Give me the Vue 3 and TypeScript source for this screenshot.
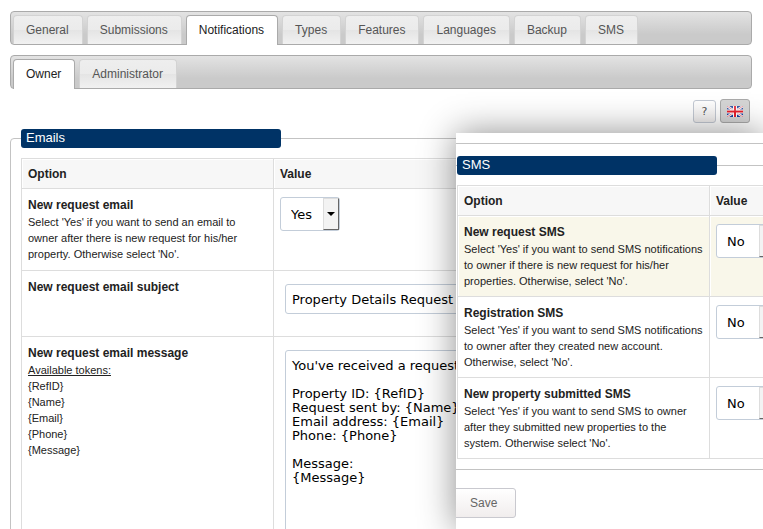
<script setup lang="ts">
import { reactive, ref } from 'vue'

interface SmsOption {
  id: string
  title: string
  hint: string
  value: string
}

const mainTabs: string[] = ['General', 'Submissions', 'Notifications', 'Types', 'Features', 'Languages', 'Backup', 'SMS']
const subTabs: string[] = ['Owner', 'Administrator']
const activeMain = ref('Notifications')
const activeSub = ref('Owner')

const tokens: string[] = ['{RefID}', '{Name}', '{Email}', '{Phone}', '{Message}']

const sendEmail = ref('Yes')
const subject = ref('Property Details Request')
const message = ref(
  "You've received a request\n\nProperty ID: {RefID}\nRequest sent by: {Name}\nEmail address: {Email}\nPhone: {Phone}\n\nMessage:\n{Message}",
)

const smsOptions = reactive<SmsOption[]>([
  {
    id: 'sms-request',
    title: 'New request SMS',
    hint: "Select 'Yes' if you want to send SMS notifications to owner if there is new request for his/her properties. Otherwise, select 'No'.",
    value: 'No',
  },
  {
    id: 'sms-registration',
    title: 'Registration SMS',
    hint: "Select 'Yes' if you want to send SMS notifications to owner after they created new account. Otherwise, select 'No'.",
    value: 'No',
  },
  {
    id: 'sms-property',
    title: 'New property submitted SMS',
    hint: "Select 'Yes' if you want to send SMS to owner after they submitted new properties to the system. Otherwise select 'No'.",
    value: 'No',
  },
])
</script>

<template>
  <div class="page">
    <nav class="tab-bar">
      <a
        v-for="tab in mainTabs"
        :key="tab"
        href="#"
        class="tab"
        :class="{ active: tab === activeMain }"
        @click.prevent="activeMain = tab"
      >{{ tab }}</a>
    </nav>
    <nav class="tab-bar">
      <a
        v-for="tab in subTabs"
        :key="tab"
        href="#"
        class="tab"
        :class="{ active: tab === activeSub }"
        @click.prevent="activeSub = tab"
      >{{ tab }}</a>
    </nav>

    <div class="tools">
      <button type="button" class="tool help">?</button>
      <button type="button" class="tool flag" aria-label="English">
        <svg width="16" height="11" viewBox="0 0 16 11" aria-hidden="true">
          <rect width="16" height="11" fill="#1c3f9a" />
          <path d="M0 0L16 11M16 0L0 11" stroke="#fff" stroke-width="2.4" />
          <path d="M0 0L16 11M16 0L0 11" stroke="#e0525c" stroke-width="0.7" />
          <path d="M8 0V11M0 5.5H16" stroke="#fff" stroke-width="4" />
          <path d="M8 0V11M0 5.5H16" stroke="#e8202c" stroke-width="2" />
          <rect width="16" height="5" fill="#fff" opacity="0.15" />
        </svg>
      </button>
    </div>

    <fieldset class="group">
      <legend>Emails</legend>
      <table class="options">
        <colgroup>
          <col class="col-option" />
          <col />
        </colgroup>
        <thead>
          <tr>
            <th>Option</th>
            <th>Value</th>
          </tr>
        </thead>
        <tbody>
          <tr>
            <td>
              <label class="title" for="send-email">New request email</label>
              <p class="hint">
                Select 'Yes' if you want to send an email to owner after there is new request for his/her property.
                Otherwise select 'No'.
              </p>
            </td>
            <td class="value">
              <span class="picker">
                <select id="send-email" v-model="sendEmail">
                  <option>Yes</option>
                  <option>No</option>
                </select>
                <span class="arrow"><svg width="8" height="4" viewBox="0 0 8 4"><path d="M0 0H8L4 4Z" /></svg></span>
              </span>
            </td>
          </tr>
          <tr class="subject-row">
            <td><label class="title" for="subject">New request email subject</label></td>
            <td class="value"><input id="subject" v-model="subject" class="field" type="text" /></td>
          </tr>
          <tr>
            <td>
              <label class="title" for="message">New request email message</label>
              <p class="hint"><u>Available tokens:</u></p>
              <p v-for="token in tokens" :key="token" class="hint">{{ token }}</p>
            </td>
            <td class="value"><textarea id="message" v-model="message" class="field" rows="14" wrap="off"></textarea></td>
          </tr>
        </tbody>
      </table>
    </fieldset>

    <section class="panel">
      <div class="panel-view">
        <div class="rule"></div>
        <fieldset class="group">
          <legend>SMS</legend>
          <table class="options">
            <colgroup>
              <col class="col-option" />
              <col />
            </colgroup>
            <thead>
              <tr>
                <th>Option</th>
                <th>Value</th>
              </tr>
            </thead>
            <tbody>
              <tr v-for="(option, index) in smsOptions" :key="option.id" :class="{ highlighted: index === 0 }">
                <td>
                  <label class="title" :for="option.id">{{ option.title }}</label>
                  <p class="hint">{{ option.hint }}</p>
                </td>
                <td class="value">
                  <span class="picker">
                    <select :id="option.id" v-model="option.value">
                      <option>Yes</option>
                      <option>No</option>
                    </select>
                    <span class="arrow"><svg width="8" height="4" viewBox="0 0 8 4"><path d="M0 0H8L4 4Z" /></svg></span>
                  </span>
                </td>
              </tr>
            </tbody>
          </table>
        </fieldset>
        <button type="button" class="save">Save</button>
      </div>
    </section>
  </div>
</template>

<style>
html {
  overflow: hidden;
}
body {
  margin: 0;
  background: #fff;
}
</style>

<style scoped>
.page {
  position: relative;
  box-sizing: border-box;
  height: 100vh;
  overflow: hidden;
  padding: 11px 11px 0 10px;
  font-family: "Liberation Sans", Arial, sans-serif;
  font-size: 12px;
  color: #222;
}
.tab-bar {
  display: flex;
  align-items: flex-end;
  gap: 4px;
  box-sizing: border-box;
  height: 34px;
  margin-bottom: 10px;
  padding: 0 2px;
  border: 1px solid #aaa;
  border-radius: 4px;
  background: linear-gradient(#e3e3e3, #cacaca 70%, #cacaca);
}
.tab {
  box-sizing: border-box;
  height: 29px;
  padding: 0 13px 0 12px;
  border: 1px solid #d3d3d3;
  border-bottom: 0;
  border-radius: 4px 4px 0 0;
  background: linear-gradient(#eee, #ebebeb 50%, #e4e4e4 50%, #f1f1f1);
  font-size: 12px;
  line-height: 28px;
  color: #555;
  text-decoration: none;
}
.tab.active {
  height: 30px;
  margin-bottom: -1px;
  border-color: #aaa;
  background: #fff;
  color: #212121;
}
.tools {
  display: flex;
  justify-content: flex-end;
  align-items: flex-end;
  gap: 4px;
  height: 24px;
  margin-bottom: 6px;
  padding-right: 2px;
}
.tool {
  display: flex;
  align-items: center;
  justify-content: center;
  box-sizing: border-box;
  padding: 0;
  border-radius: 3px;
}
.help {
  width: 23px;
  height: 23px;
  border: 1px solid #c3c9d3;
  background: linear-gradient(#fff, #f0eeee);
  font: 11px "DejaVu Sans", sans-serif;
  color: #555;
}
.flag {
  width: 30px;
  height: 24px;
  border: 1px solid #aaa;
  background: #d6d6d6;
}
.group {
  min-width: 0;
  margin: 0;
  padding: 10px;
  border: 1px solid #c3c3c3;
  border-radius: 4px;
}
.group legend {
  box-sizing: border-box;
  width: 260px;
  height: 19px;
  padding: 0 5px;
  border-radius: 3px;
  background: #036;
  font-size: 13px;
  line-height: 18px;
  color: #fff;
}
.options {
  width: 100%;
  table-layout: fixed;
  border-collapse: separate;
  border-spacing: 0;
  border: solid #ddd;
  border-width: 1px 0 0 1px;
}
.col-option {
  width: 252px;
}
th,
td {
  box-sizing: border-box;
  border: solid #ddd;
  border-width: 0 1px 1px 0;
  box-shadow: inset 1px 1px #fff;
  text-align: left;
  vertical-align: top;
}
th {
  height: 30px;
  padding: 0 6px;
  background: #f7f7f7;
  vertical-align: middle;
}
td {
  padding: 7px 6px 8px;
}
td.value {
  padding-top: 8px;
}
.highlighted td {
  background: #f9f7ea;
}
.title {
  display: block;
  font-weight: bold;
  line-height: 18px;
}
.hint {
  margin: 0;
  font-size: 11px;
  line-height: 16px;
}
.subject-row td {
  height: 66px;
}
.picker {
  display: grid;
  grid-template-columns: 43px 17px;
  width: 60px;
  height: 34px;
}
.picker select {
  grid-area: 1 / 1 / 2 / 3;
  box-sizing: border-box;
  width: 60px;
  height: 34px;
  padding: 0 10px;
  border: 1px solid #c3cdd9;
  border-radius: 3px;
  appearance: none;
  background: #fff;
  font: 13px "DejaVu Sans", Verdana, sans-serif;
  color: #000;
}
.arrow {
  grid-area: 1 / 2 / 2 / 3;
  display: flex;
  align-items: center;
  justify-content: center;
  z-index: 1;
  margin: 1px 1px 1px 0;
  border: 1px solid #ddd;
  border-right-color: #666;
  border-bottom-color: #666;
  background: #f3f3f3;
  pointer-events: none;
}
.field {
  display: block;
  box-sizing: border-box;
  width: calc(100% - 10px);
  margin: 5px;
  padding: 0 6px;
  border: 1px solid #c3cdd9;
  border-radius: 3px;
  background: #fff;
  font: 13px "DejaVu Sans", Verdana, sans-serif;
  color: #000;
}
input.field {
  height: 30px;
}
textarea.field {
  height: 220px;
  padding-top: 8px;
  line-height: 14px;
  resize: none;
}
.panel {
  position: absolute;
  top: 133px;
  right: 0;
  bottom: 0;
  left: 456px;
  background: #fff;
  box-shadow: 0 0 34px rgba(0, 0, 0, 0.45);
}
.panel-view {
  height: 100%;
  overflow: hidden;
}
.panel .rule {
  height: 10px;
  margin-bottom: 12px;
  border-bottom: 1px solid #c3c3c3;
}
.panel .group {
  margin: 0 -20px 0 -10px;
}
.panel td {
  padding-bottom: 7px;
}
.save {
  height: 30px;
  margin: 18px 0 0 -6px;
  padding: 0 18px 0 19px;
  border: 1px solid #c9c9cf;
  border-radius: 3px;
  background: linear-gradient(#fff, #f1eded);
  font: 12px "Liberation Sans", Arial, sans-serif;
  color: #666;
}
</style>
